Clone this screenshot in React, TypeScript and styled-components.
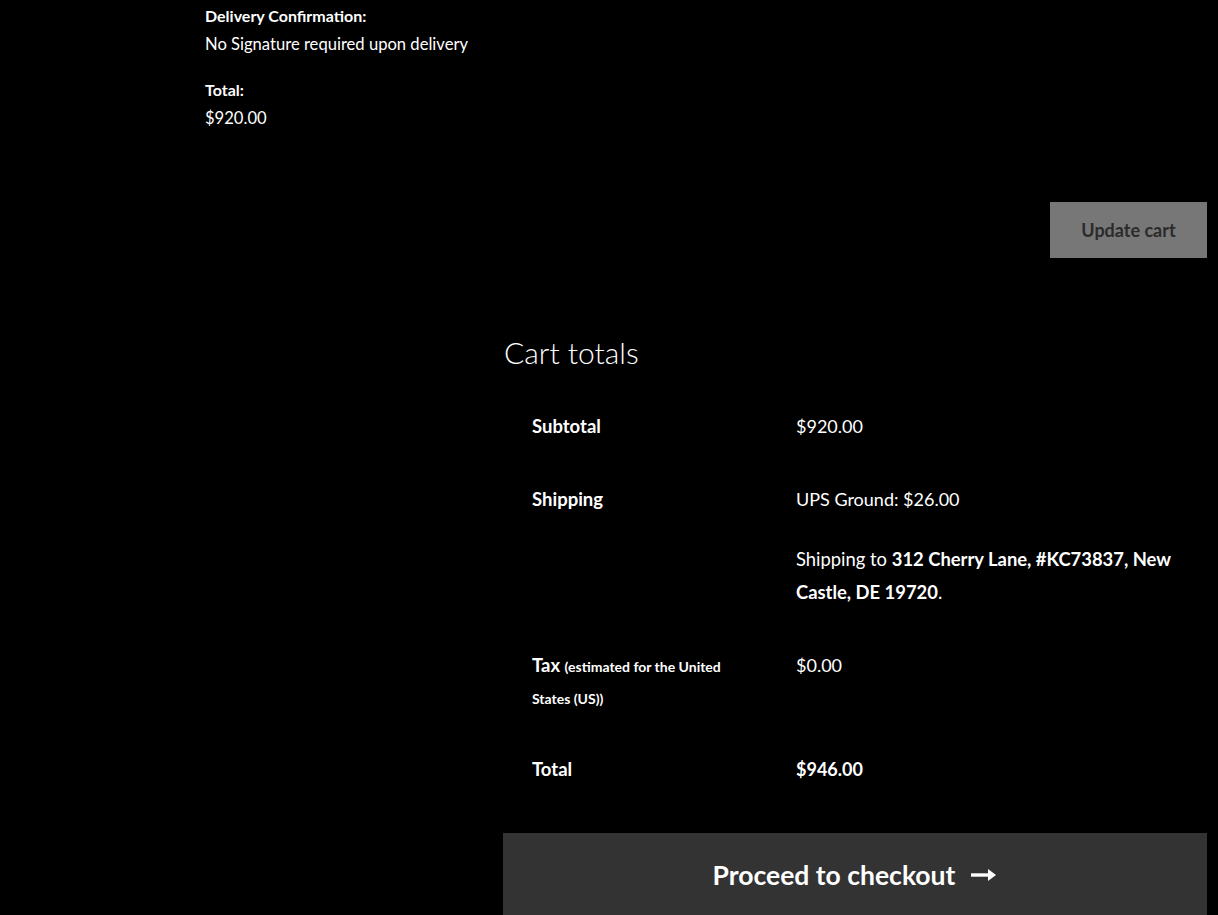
import styled, { createGlobalStyle } from 'styled-components';

const GlobalStyle = createGlobalStyle`
  html, body {
    margin: 0;
    padding: 0;
    background: #000;
  }
  body {
    font-family: Lato, "Liberation Sans", sans-serif;
    color: #fff;
  }
`;

const Page = styled.div`
  width: 1002px;
  margin-left: 205px;
  padding-top: 2px;
`;

const MetaList = styled.dl`
  margin: 0;
  font-size: 16.6px;
  line-height: 28px;
`;

const MetaTerm = styled.dt<{ $first?: boolean }>`
  font-weight: 700;
  font-size: 16px;
  margin-top: ${(p) => (p.$first ? '0' : '18px')};
`;

const MetaValue = styled.dd`
  margin: 0;
`;

const Actions = styled.div`
  display: flex;
  justify-content: flex-end;
  margin-top: 70px;
`;

const UpdateButton = styled.button`
  width: 157px;
  height: 56px;
  border: none;
  background: #777;
  color: #2b2b2b;
  font-family: inherit;
  font-size: 18px;
  font-weight: 700;
  cursor: not-allowed;
`;

const Totals = styled.section`
  width: 704px;
  margin-left: auto;
  margin-top: 74px;
`;

const Heading = styled.h2`
  margin: 0 0 18px 1px;
  font-size: 30px;
  font-weight: 300;
  line-height: 40px;
`;

const Row = styled.div`
  display: grid;
  grid-template-columns: 230px 1fr;
  column-gap: 34px;
  padding: 20px 0 20px 29px;
  font-size: 18px;
  line-height: 33px;
`;

const Label = styled.div`
  font-weight: 700;
  font-size: 18.5px;
  line-height: 32px;
`;

const Small = styled.small`
  font-size: 14px;
  line-height: 1;
`;

const Value = styled.div<{ $bold?: boolean }>`
  font-weight: ${(p) => (p.$bold ? 700 : 400)};

  p {
    margin: 27px 0 0;
    font-size: 18.4px;
  }
  strong {
    font-weight: 700;
  }
`;

const Checkout = styled.a`
  display: flex;
  align-items: center;
  justify-content: center;
  gap: 16px;
  height: 84px;
  margin-top: 27px;
  background: #333;
  color: #fff;
  font-size: 26.5px;
  font-weight: 700;
  text-decoration: none;
`;

const Arrow = () => (
  <svg width="26" height="14" viewBox="0 0 26 14" aria-hidden="true">
    <path d="M0 7h19" stroke="#fff" strokeWidth="3.4" />
    <path d="M17 1l8 6-8 6z" fill="#fff" />
  </svg>
);

export default function App() {
  return (
    <>
      <GlobalStyle />
      <Page>
        <MetaList>
          <MetaTerm $first>Delivery Confirmation:</MetaTerm>
          <MetaValue>No Signature required upon delivery</MetaValue>
          <MetaTerm>Total:</MetaTerm>
          <MetaValue>$920.00</MetaValue>
        </MetaList>
        <Actions>
          <UpdateButton disabled>Update cart</UpdateButton>
        </Actions>
        <Totals>
          <Heading>Cart totals</Heading>
          <Row>
            <Label>Subtotal</Label>
            <Value>$920.00</Value>
          </Row>
          <Row>
            <Label>Shipping</Label>
            <Value>
              UPS Ground: $26.00
              <p>
                Shipping to <strong>312 Cherry Lane, #KC73837, New Castle, DE 19720</strong>.
              </p>
            </Value>
          </Row>
          <Row>
            <Label>
              Tax <Small>(estimated for the United States (US))</Small>
            </Label>
            <Value>$0.00</Value>
          </Row>
          <Row>
            <Label>Total</Label>
            <Value $bold>$946.00</Value>
          </Row>
          <Checkout href="#">
            Proceed to checkout <Arrow />
          </Checkout>
        </Totals>
      </Page>
    </>
  );
}
